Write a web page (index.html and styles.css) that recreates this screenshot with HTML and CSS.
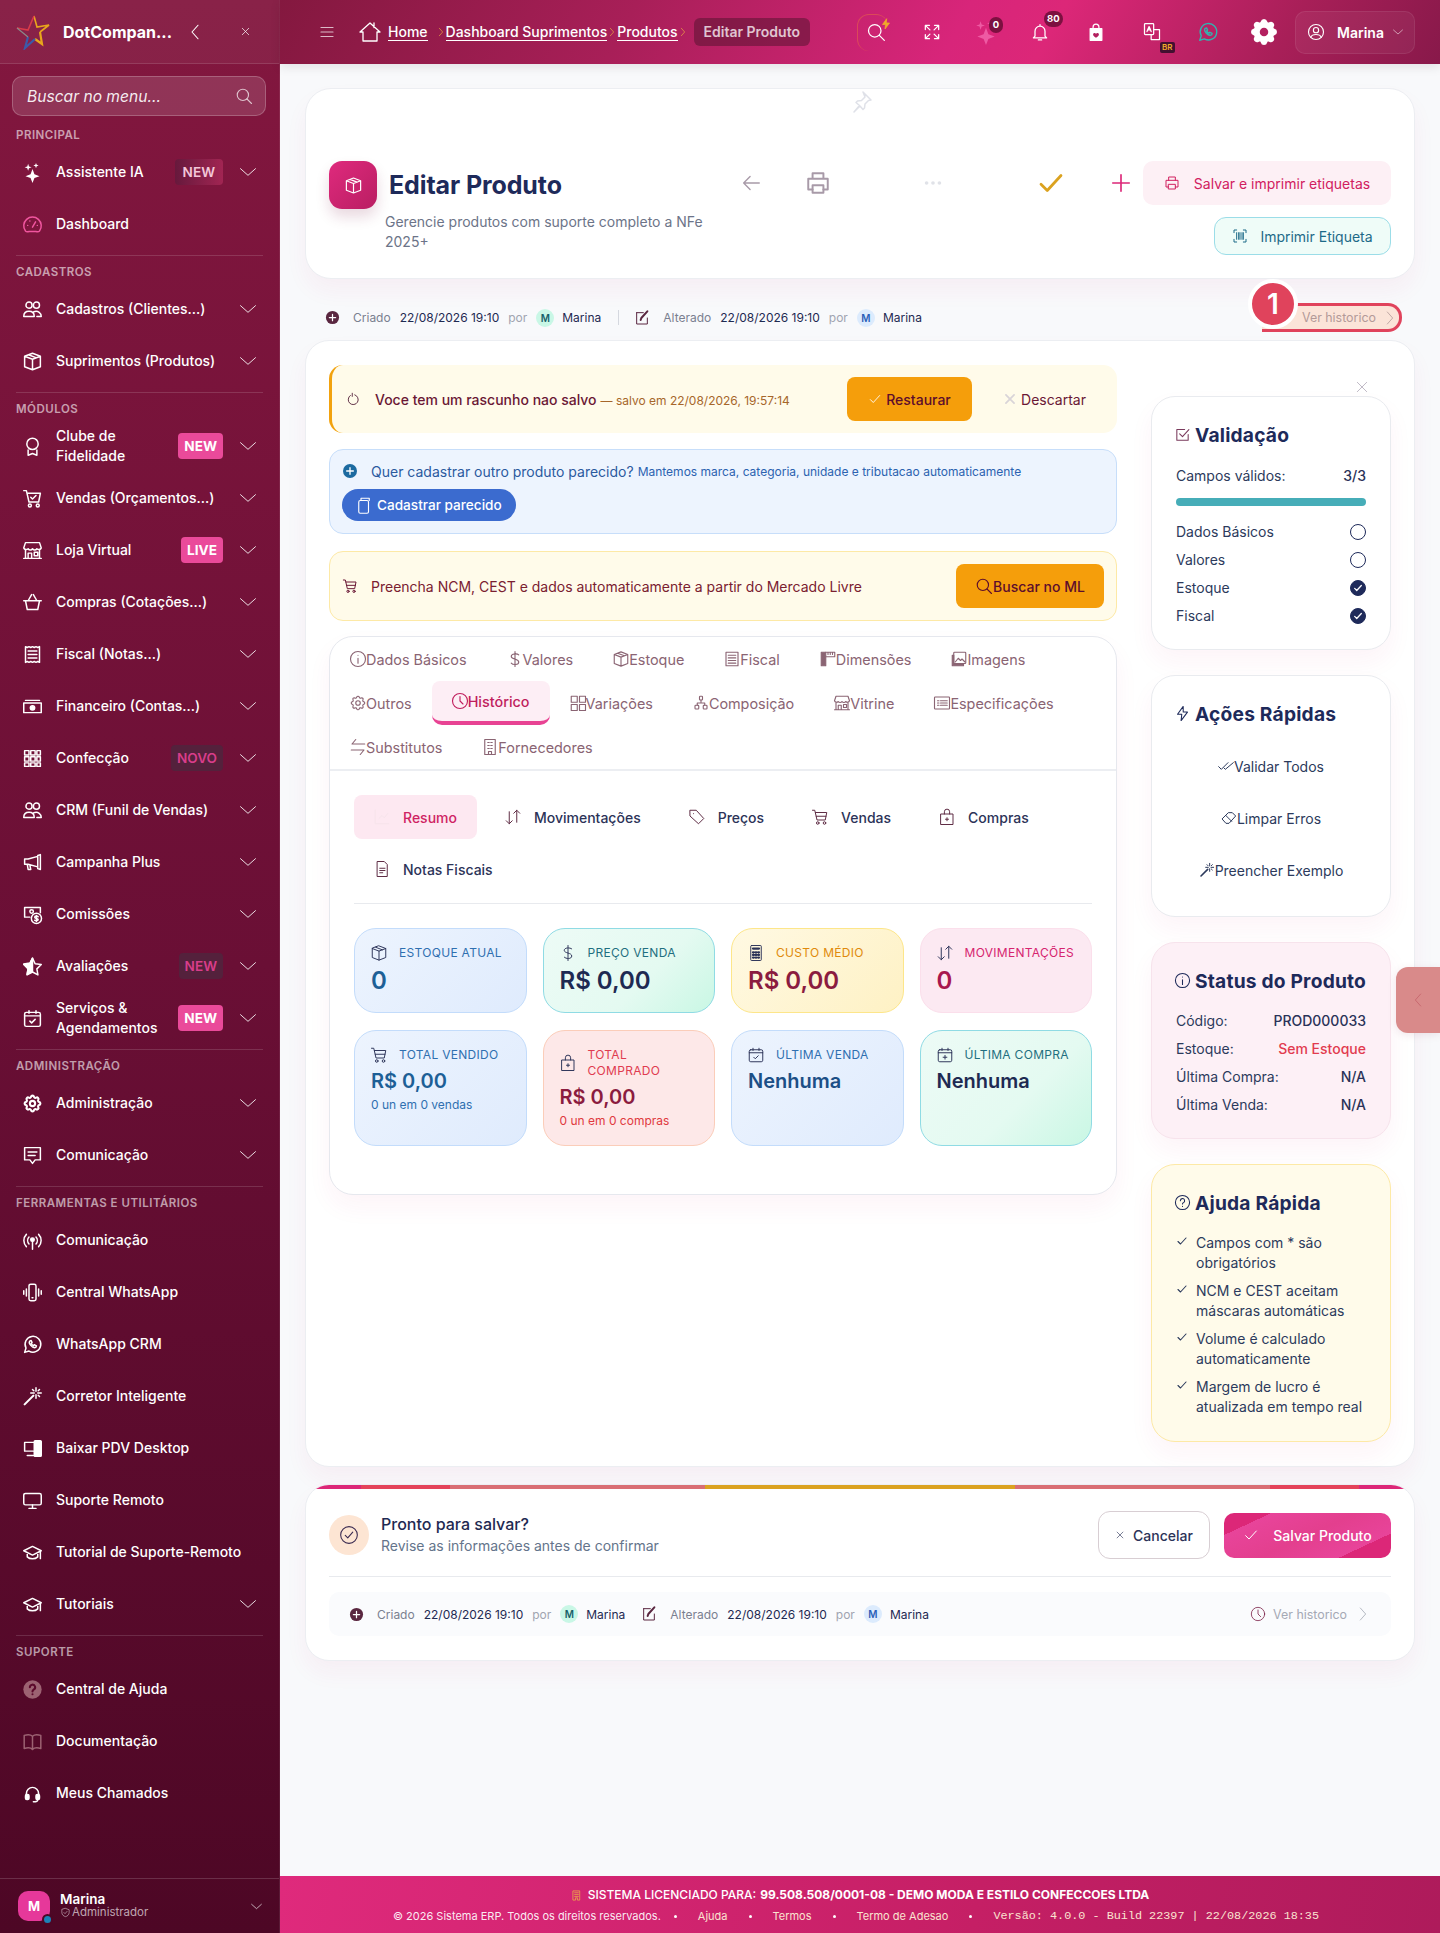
FILE: index.html
```html
<!DOCTYPE html>
<html lang="pt-BR">
<head>
    <meta charset="UTF-8">
    <title>Editar Produto</title>
    <meta name="viewport" content="width=device-width, initial-scale=1.0">
    <link rel="stylesheet" href="styles.css">
</head>
<body>
    <!-- icones -->
    <svg class="sprite" xmlns="http://www.w3.org/2000/svg">
        <symbol id="i-stars" viewBox="0 0 24 24"><path fill="currentColor" stroke="none" d="M12 8l2.200 6 5.800 2.200-5.800 2.200-2.200 5.600-2.200-5.600-5.800-2.200 5.800-2.200zM7 2l1 3 3 1-3 1-1 3-1-3-3-1 3-1zM16 1l.8 2.200 2.200.8-2.200.8L16 7l-.8-2.200L13 4l2.200-.8z"/></symbol>
        <symbol id="i-speedo" viewBox="0 0 24 24"><path d="M4 19.500a10 10 0 1 1 16 0c-1 1-2.500 1-4 .5H8c-1.500.5-3 .5-4-.5zM12 15l3.500-6M6.500 13h.01M9 8h.01M17.500 13h.01"/></symbol>
        <symbol id="i-people" viewBox="0 0 24 24"><circle cx="8" cy="7" r="3.500"/><circle cx="16.500" cy="7" r="3.500"/><path d="M2 20c0-4 2.500-6 6-6s6 2 6 6zM13.500 14.500c5-1.500 8.500 1.500 8.500 5.500h-5"/></symbol>
        <symbol id="i-box" viewBox="0 0 24 24"><path d="M12 2.500l9 3.500v12l-9 3.500-9-3.500V6zM3 6l9 3.500L21 6M12 9.500v12M7.500 4.300l9 3.500"/></symbol>
        <symbol id="i-award" viewBox="0 0 24 24"><circle cx="12" cy="9" r="6.500"/><path d="M7 16v6l5-2 5 2v-6"/></symbol>
        <symbol id="i-cart-check" viewBox="0 0 24 24"><path d="M2 3h3l3 13h11l2-10H6"/><circle cx="9" cy="20" r="1.700"/><circle cx="18" cy="20" r="1.700"/><path d="M10 10.500l2 2 4-4"/></symbol>
        <symbol id="i-cart" viewBox="0 0 24 24"><path d="M2 3h3l3 13h11l2-10H6M7 11h13"/><circle cx="9" cy="20" r="1.700"/><circle cx="18" cy="20" r="1.700"/></symbol>
        <symbol id="i-shop" viewBox="0 0 24 24"><path d="M4 3h16l2 6a3 3 0 0 1-5 1 3 3 0 0 1-5 0 3 3 0 0 1-5 0 3 3 0 0 1-5-1zM4 11v10h16V11M2 21h20M7 21v-6h4v6M14 14h4v4h-4z"/></symbol>
        <symbol id="i-basket" viewBox="0 0 24 24"><path d="M2 10h20M4 10l2 10h12l2-10M7 10l4-7M17 10l-4-7"/></symbol>
        <symbol id="i-receipt" viewBox="0 0 24 24"><path d="M4 3l2 1 2-1 2 1 2-1 2 1 2-1 2 1 2-1v18l-2-1-2 1-2-1-2 1-2-1-2 1-2-1-2 1zM7 8h10M7 12h10M7 16h10"/></symbol>
        <symbol id="i-cash" viewBox="0 0 24 24"><path d="M4 5h16M2 8h20v11H2z"/><circle cx="12" cy="13.500" r="2.500" fill="currentColor"/></symbol>
        <symbol id="i-grid" viewBox="0 0 24 24"><path d="M3 3h5v5H3zM10 3h5v5h-5zM17 3h4v5h-4zM3 10h5v5H3zM10 10h5v5h-5zM17 10h4v5h-4zM3 17h5v4H3zM10 17h5v4h-5zM17 17h4v4h-4z"/></symbol>
        <symbol id="i-mega" viewBox="0 0 24 24"><path d="M21 3v17l-3-1V4zM18 5L7 8H3v6h4l11 3M6 14l1 6h3l-1-5"/></symbol>
        <symbol id="i-coin" viewBox="0 0 24 24"><path d="M9 15H3V4h18v6"/><circle cx="11" cy="8.500" r="2"/><circle cx="16.500" cy="16.500" r="5.800"/><path d="M16.500 13v7M18.500 14.500c-1-1-4-1-4 .7s4 1 4 2.600-3 1.700-4 .7"/></symbol>
        <symbol id="i-star-half" viewBox="0 0 24 24"><path d="M12 2.500l3 6.300 7 1-5 4.900 1.200 6.900-6.200-3.300-6.200 3.300 1.200-6.900-5-4.900 7-1z"/><path fill="currentColor" d="M12 2.500v15.100l-6.200 3.300 1.200-6.900-5-4.900 7-1z"/></symbol>
        <symbol id="i-cal-check" viewBox="0 0 24 24"><rect x="3" y="5" width="18" height="16" rx="2"/><path d="M3 9h18M8 3v3M16 3v3M9 15l2 2 4-4"/></symbol>
        <symbol id="i-cal-plus" viewBox="0 0 24 24"><rect x="3" y="5" width="18" height="16" rx="2"/><path d="M3 9h18M8 3v3M16 3v3M12 12.500v5M9.500 15h5"/></symbol>
        <symbol id="i-gear" viewBox="0 0 24 24"><path d="M10.325 4.317c.426-1.756 2.924-1.756 3.350 0a1.724 1.724 0 0 0 2.573 1.066c1.543-.940 3.310.826 2.370 2.370a1.724 1.724 0 0 0 1.065 2.572c1.756.426 1.756 2.924 0 3.350a1.724 1.724 0 0 0-1.066 2.573c.940 1.543-.826 3.310-2.370 2.370a1.724 1.724 0 0 0-2.572 1.065c-.426 1.756-2.924 1.756-3.350 0a1.724 1.724 0 0 0-2.573-1.066c-1.543.940-3.310-.826-2.370-2.370a1.724 1.724 0 0 0-1.065-2.572c-1.756-.426-1.756-2.924 0-3.350a1.724 1.724 0 0 0 1.066-2.573c-.940-1.543.826-3.310 2.370-2.370 1 .608 2.296.070 2.572-1.065z"/><circle cx="12" cy="12" r="3"/></symbol>
        <symbol id="i-gear-fill" viewBox="0 0 24 24"><path fill="currentColor" d="M10.325 4.317c.426-1.756 2.924-1.756 3.350 0a1.724 1.724 0 0 0 2.573 1.066c1.543-.940 3.310.826 2.370 2.370a1.724 1.724 0 0 0 1.065 2.572c1.756.426 1.756 2.924 0 3.350a1.724 1.724 0 0 0-1.066 2.573c.940 1.543-.826 3.310-2.370 2.370a1.724 1.724 0 0 0-2.572 1.065c-.426 1.756-2.924 1.756-3.350 0a1.724 1.724 0 0 0-2.573-1.066c-1.543.940-3.310-.826-2.370-2.370a1.724 1.724 0 0 0-1.065-2.572c-1.756-.426-1.756-2.924 0-3.350a1.724 1.724 0 0 0 1.066-2.573c-.940-1.543.826-3.310 2.370-2.370 1 .608 2.296.070 2.572-1.065z"/><circle cx="12" cy="12" r="3.200" fill="#b3205f" stroke="none"/></symbol>
        <symbol id="i-chat" viewBox="0 0 24 24"><path d="M3 3h18v14h-6l-3 4-3-4H3zM7 8h10M7 12h8"/></symbol>
        <symbol id="i-signal" viewBox="0 0 24 24"><path d="M5 5a10 10 0 0 0 0 14M19 5a10 10 0 0 1 0 14M8 8a6 6 0 0 0 0 8M16 8a6 6 0 0 1 0 8M12 12v10"/><circle cx="12" cy="11" r="2" fill="currentColor"/></symbol>
        <symbol id="i-phone" viewBox="0 0 24 24"><rect x="8" y="2.500" width="8" height="19" rx="2"/><path d="M5 8v8M2 10v4M19 8v8M22 10v4M11.500 18h1"/></symbol>
        <symbol id="i-whats" viewBox="0 0 24 24"><path d="M3 21l1.600-5A9 9 0 1 1 8 19.500z"/><path d="M9 8c-1 1-.8 3 1 5s4.500 3 6 2l.5-1.500-2.500-1.200-1 1c-1-.4-2-1.500-2.500-2.500l1-1L10.500 7.500z"/></symbol>
        <symbol id="i-magic" viewBox="0 0 24 24"><path stroke-width="2.400" d="M3 21l10-10"/><path d="M16 2v4M16 10v4M10 8h4M18 8h4M12 4l1.500 1.500M20 4l-1.500 1.500M20 12l-1.500-1.500"/></symbol>
        <symbol id="i-pc" viewBox="0 0 24 24"><path d="M13 5H3v10h10M6 20h7"/><rect x="14" y="3" width="8" height="18" rx="1" fill="currentColor"/></symbol>
        <symbol id="i-display" viewBox="0 0 24 24"><rect x="2" y="4" width="20" height="13" rx="2"/><path d="M8 21h8M12 17v4"/></symbol>
        <symbol id="i-grad" viewBox="0 0 24 24"><path d="M12 5L2 10l10 5 10-5zM6 12v5c3 3 9 3 12 0v-5M21 10v9"/></symbol>
        <symbol id="i-help-fill" viewBox="0 0 24 24"><circle cx="12" cy="12" r="10.500" fill="currentColor" stroke="none"/><path stroke="#5c0a2c" stroke-width="2.400" d="M9 9.500a3 3 0 1 1 4.300 2.700c-.8.500-1.300 1-1.300 2M12 17.500h.01"/></symbol>
        <symbol id="i-help" viewBox="0 0 24 24"><circle cx="12" cy="12" r="10"/><path d="M9 9.500a3 3 0 1 1 4.300 2.700c-.8.500-1.300 1-1.300 2M12 17.500h.01"/></symbol>
        <symbol id="i-book" viewBox="0 0 24 24"><path d="M12 6C10 4 6 4 2.500 5v15C6 19 10 19 12 21c2-2 6-2 9.500-1V5C18 4 14 4 12 6zM12 6v15"/></symbol>
        <symbol id="i-headset" viewBox="0 0 24 24"><path d="M5 14v-2a7 7 0 0 1 14 0v2M18 19c0 2-3 2.500-5 2.500"/><rect x="4" y="13" width="4" height="6" rx="1.500" fill="currentColor"/><rect x="16" y="13" width="4" height="6" rx="1.500" fill="currentColor"/></symbol>
        <symbol id="i-down" viewBox="0 0 24 24"><path d="M3 8l9 8 9-8"/></symbol>
        <symbol id="i-left" viewBox="0 0 24 24"><path d="M16 3l-8 9 8 9"/></symbol>
        <symbol id="i-right" viewBox="0 0 24 24"><path d="M8 3l8 9-8 9"/></symbol>
        <symbol id="i-x" viewBox="0 0 24 24"><path d="M5 5l14 14M19 5L5 19"/></symbol>
        <symbol id="i-search" viewBox="0 0 24 24"><circle cx="10.500" cy="10.500" r="7.500"/><path d="M16 16l6 6"/></symbol>
        <symbol id="i-list" viewBox="0 0 24 24"><path d="M4 6h16M4 12h16M4 18h16"/></symbol>
        <symbol id="i-home" viewBox="0 0 24 24"><path d="M12 3L2 12h3v9h14v-9h3zM16 3v4.500"/></symbol>
        <symbol id="i-bolt" viewBox="0 0 24 24"><path d="M13 2L5 13h6l-1 9 9-12h-6z"/></symbol>
        <symbol id="i-expand" viewBox="0 0 24 24"><path d="M4 9V4h5M4 4l5.500 5.500M20 9V4h-5M20 4l-5.500 5.500M4 15v5h5M4 20l5.500-5.500M20 15v5h-5M20 20l-5.500-5.500"/></symbol>
        <symbol id="i-bell" viewBox="0 0 24 24"><path d="M6 17V11a6 6 0 0 1 12 0v6l2 2H4zM10 21.500h4M12 3v2"/></symbol>
        <symbol id="i-bag-heart" viewBox="0 0 24 24"><path fill="currentColor" d="M5 8h14v14H5z"/><path d="M8.500 8V6a3.500 3.500 0 0 1 7 0v2"/><path fill="#b3205f" stroke="none" d="M12 19c-3-2-3.500-3-3.500-4a1.800 1.800 0 0 1 3.500-.7 1.800 1.800 0 0 1 3.500.7c0 1-.5 2-3.500 4z"/></symbol>
        <symbol id="i-translate" viewBox="0 0 24 24"><rect x="3" y="2" width="11" height="13" rx="1"/><path d="M6 11.500l2.500-6 2.500 6M7 9.500h3M14 9h7v12H11v-6"/></symbol>
        <symbol id="i-user" viewBox="0 0 24 24"><circle cx="12" cy="12" r="10"/><circle cx="12" cy="9.500" r="3.500"/><path d="M5 19c2-5 12-5 14 0"/></symbol>
        <symbol id="i-pin" viewBox="0 0 24 24"><path d="M13 2l8 8-2.500.5-3.500 3.500-.5 4-1.500 1.500-3-3.500-6 6 5.500-6.500-3.500-3 1.500-1.500 4-.5 3.500-3.500z"/></symbol>
        <symbol id="i-back" viewBox="0 0 24 24"><path d="M21 12H4M11 5l-7 7 7 7"/></symbol>
        <symbol id="i-print" viewBox="0 0 24 24"><path d="M7 8V3h10v5M7 18H3V8h18v10h-4"/><rect x="7" y="14" width="10" height="7"/></symbol>
        <symbol id="i-dots" viewBox="0 0 24 24"><circle cx="5" cy="12" r="2" fill="currentColor" stroke="none"/><circle cx="12" cy="12" r="2" fill="currentColor" stroke="none"/><circle cx="19" cy="12" r="2" fill="currentColor" stroke="none"/></symbol>
        <symbol id="i-check" viewBox="0 0 24 24"><path d="M4 13l5 5L20 6"/></symbol>
        <symbol id="i-check2" viewBox="0 0 24 24"><path d="M1 13l4 4L15 7M9 15l2 2L23 7"/></symbol>
        <symbol id="i-plus" viewBox="0 0 24 24"><path d="M12 3v18M3 12h18"/></symbol>
        <symbol id="i-barcode" viewBox="0 0 24 24"><path d="M3 7V3h4M17 3h4v4M3 17v4h4M17 21h4v-4M7 7v10M10 7v10M12 7v10M15 7v10M17 7v10"/></symbol>
        <symbol id="i-plus-fill" viewBox="0 0 24 24"><circle cx="12" cy="12" r="10.500" fill="currentColor" stroke="none"/><path stroke="#fff" stroke-width="2" d="M12 7v10M7 12h10"/></symbol>
        <symbol id="i-edit" viewBox="0 0 24 24"><path d="M4 4h10M4 4v17h16v-9"/><path stroke-width="3" d="M20 2l-9 10-1 3"/></symbol>
        <symbol id="i-clock" viewBox="0 0 24 24"><circle cx="12" cy="12" r="10"/><path d="M12 6v6l4 4"/></symbol>
        <symbol id="i-redo" viewBox="0 0 24 24"><path d="M14 4.500a8 8 0 1 1-7 1M10 2v5"/></symbol>
        <symbol id="i-info" viewBox="0 0 24 24"><circle cx="12" cy="12" r="10"/><path d="M12 11v6.500M12 7h.01"/></symbol>
        <symbol id="i-doc-list" viewBox="0 0 24 24"><rect x="4" y="3" width="16" height="18"/><path d="M7 7h10M7 10.500h10M7 14h10M7 17.500h10"/></symbol>
        <symbol id="i-ruler" viewBox="0 0 24 24"><path fill="currentColor" d="M3 3h6v18H3z"/><path d="M9 3h12v6H9M12 3v3M15 3v3M18 3v3"/></symbol>
        <symbol id="i-images" viewBox="0 0 24 24"><rect x="5" y="3" width="16" height="15" rx="1"/><path fill="currentColor" d="M3 7v14h15v-3H5V7z"/><path d="M7 16l4-5 3 3 2-2 4 4"/></symbol>
        <symbol id="i-swap" viewBox="0 0 24 24"><path d="M21 8H4l5-6M3 16h17l-5 6"/></symbol>
        <symbol id="i-building" viewBox="0 0 24 24"><rect x="5" y="2" width="14" height="20"/><path d="M9 6h2M13 6h2M9 10h2M13 10h2M9 14h2M13 14h2M10 22v-4h4v4"/></symbol>
        <symbol id="i-nodes" viewBox="0 0 24 24"><rect x="10" y="3" width="4" height="5" rx="1"/><rect x="4" y="15" width="5" height="5" rx="1"/><rect x="15" y="15" width="5" height="5" rx="1"/><path d="M12 8v3M7 15v-3h10v3"/></symbol>
        <symbol id="i-squares" viewBox="0 0 24 24"><path d="M3 3h8v8H3zM14 3h8v8h-8zM3 14h8v8H3zM14 14h8v8h-8z"/></symbol>
        <symbol id="i-lines" viewBox="0 0 24 24"><rect x="2" y="4" width="20" height="16" rx="1"/><path d="M6 9h2M10 9h9M6 12h2M10 12h9M6 15h2M10 15h9"/></symbol>
        <symbol id="i-tags" viewBox="0 0 24 24"><path d="M3 3h8l10 11-7 7L3 11zM7.500 7.500h.01"/></symbol>
        <symbol id="i-updown" viewBox="0 0 24 24"><path d="M7 21V5M3 17l4 4 4-4M17 3v16M13 7l4-4 4 4"/></symbol>
        <symbol id="i-bag-plus" viewBox="0 0 24 24"><path d="M4 8h16v14H4zM8.500 8V5a3.500 3.500 0 0 1 7 0v3M12 13v4M10 15h4"/></symbol>
        <symbol id="i-calc" viewBox="0 0 24 24"><rect x="5" y="2" width="14" height="20" rx="1"/><path stroke-width="3" d="M8 6h8M8 11h1M11.500 11h1M15 11h1M8 14.500h1M11.500 14.500h1M15 14.500h1M8 18h1M11.500 18h1M15 18h1"/></symbol>
        <symbol id="i-check-box" viewBox="0 0 24 24"><path d="M20 12v8H4V5h11M8 11l4 4 9-10"/></symbol>
        <symbol id="i-check-circle" viewBox="0 0 24 24"><circle cx="12" cy="12" r="10"/><path d="M7.500 12.500l3 3 6-7"/></symbol>
        <symbol id="i-eraser" viewBox="0 0 24 24"><path d="M2 13l9-9h6l5 5-10 11H8zM7 8l9 9"/></symbol>
        <symbol id="i-doc" viewBox="0 0 24 24"><path d="M6 2h9l4 4v16H6zM9 11h7M9 14h7M9 17h4"/></symbol>
        <symbol id="i-shield" viewBox="0 0 24 24"><path d="M12 3l8 3v6c0 5-4 8-8 9-4-1-8-4-8-9V6zM8.500 12l2.500 2.500 4.500-5"/></symbol>
        <symbol id="i-copy" viewBox="0 0 24 24"><rect x="5" y="6" width="13" height="17" rx="2"/><path d="M8 6V3h11v3"/></symbol>
        <symbol id="i-chart" viewBox="0 0 24 24"><path d="M3 3v18h18M8 14l4-4 3 3 5-6"/></symbol>
        <symbol id="i-license" viewBox="0 0 24 24"><path d="M5 2h14v20h-5v-5h-4v5H5zM8 6h8M8 10h8M8 14h8"/></symbol>
        <symbol id="i-dollar" viewBox="0 0 24 24"><path d="M12 2v20M17 6.500C15 4.500 7 4.500 7 8.500s10 3 10 7.500-8 4-10 1.500"/></symbol>
    </svg>

    <!-- menu lateral -->
    <aside class="sidebar">
        <div class="brand">
            <svg class="brand-logo" viewBox="0 0 36 36">
                <path fill="none" stroke="#e8a61c" stroke-width="1.600" d="M19 2l3 11 12-2-9 7"/>
                <path fill="none" stroke="#d83a4a" stroke-width="1.600" d="M2 14l11 2 6-14"/>
                <path fill="none" stroke="#e8a61c" stroke-width="2.200" d="M25 18l2 12-7-5"/>
                <path fill="none" stroke="#3c5aa8" stroke-width="2.200" d="M20 25L10 34l3-11"/>
                <path fill="none" stroke="#8a8a8a" stroke-width="1.200" d="M13 23L2 14"/>
            </svg>
            <span class="brand-name">DotCompan...</span>
            <svg class="ic brand-back"><use href="#i-left"/></svg>
            <svg class="ic brand-close"><use href="#i-x"/></svg>
        </div>
        <div class="menu-search">
            <span>Buscar no menu...</span>
            <svg class="ic"><use href="#i-search"/></svg>
        </div>
        <nav class="menu">
            <div class="menu-group">
                <div class="menu-label">PRINCIPAL</div>
                <a class="menu-item"><svg class="ic"><use href="#i-stars"/></svg><span class="menu-text">Assistente IA</span><span class="tag tag-soft">NEW</span><svg class="ic menu-arrow"><use href="#i-down"/></svg></a>
                <a class="menu-item"><svg class="ic ic-pink"><use href="#i-speedo"/></svg><span class="menu-text">Dashboard</span></a>
            </div>
            <div class="menu-group">
                <div class="menu-label">CADASTROS</div>
                <a class="menu-item"><svg class="ic"><use href="#i-people"/></svg><span class="menu-text">Cadastros (Clientes...)</span><svg class="ic menu-arrow"><use href="#i-down"/></svg></a>
                <a class="menu-item"><svg class="ic"><use href="#i-box"/></svg><span class="menu-text">Suprimentos (Produtos)</span><svg class="ic menu-arrow"><use href="#i-down"/></svg></a>
            </div>
            <div class="menu-group">
                <div class="menu-label">MÓDULOS</div>
                <a class="menu-item"><svg class="ic"><use href="#i-award"/></svg><span class="menu-text">Clube de Fidelidade</span><span class="tag">NEW</span><svg class="ic menu-arrow"><use href="#i-down"/></svg></a>
                <a class="menu-item"><svg class="ic"><use href="#i-cart-check"/></svg><span class="menu-text">Vendas (Orçamentos...)</span><svg class="ic menu-arrow"><use href="#i-down"/></svg></a>
                <a class="menu-item"><svg class="ic"><use href="#i-shop"/></svg><span class="menu-text">Loja Virtual</span><span class="tag">LIVE</span><svg class="ic menu-arrow"><use href="#i-down"/></svg></a>
                <a class="menu-item"><svg class="ic"><use href="#i-basket"/></svg><span class="menu-text">Compras (Cotações...)</span><svg class="ic menu-arrow"><use href="#i-down"/></svg></a>
                <a class="menu-item"><svg class="ic"><use href="#i-receipt"/></svg><span class="menu-text">Fiscal (Notas...)</span><svg class="ic menu-arrow"><use href="#i-down"/></svg></a>
                <a class="menu-item"><svg class="ic"><use href="#i-cash"/></svg><span class="menu-text">Financeiro (Contas...)</span><svg class="ic menu-arrow"><use href="#i-down"/></svg></a>
                <a class="menu-item"><svg class="ic"><use href="#i-grid"/></svg><span class="menu-text">Confecção</span><span class="tag tag-dim">NOVO</span><svg class="ic menu-arrow"><use href="#i-down"/></svg></a>
                <a class="menu-item"><svg class="ic"><use href="#i-people"/></svg><span class="menu-text">CRM (Funil de Vendas)</span><svg class="ic menu-arrow"><use href="#i-down"/></svg></a>
                <a class="menu-item"><svg class="ic"><use href="#i-mega"/></svg><span class="menu-text">Campanha Plus</span><svg class="ic menu-arrow"><use href="#i-down"/></svg></a>
                <a class="menu-item"><svg class="ic"><use href="#i-coin"/></svg><span class="menu-text">Comissões</span><svg class="ic menu-arrow"><use href="#i-down"/></svg></a>
                <a class="menu-item"><svg class="ic"><use href="#i-star-half"/></svg><span class="menu-text">Avaliações</span><span class="tag tag-dim">NEW</span><svg class="ic menu-arrow"><use href="#i-down"/></svg></a>
                <a class="menu-item"><svg class="ic"><use href="#i-cal-check"/></svg><span class="menu-text">Serviços &amp; Agendamentos</span><span class="tag">NEW</span><svg class="ic menu-arrow"><use href="#i-down"/></svg></a>
            </div>
            <div class="menu-group">
                <div class="menu-label">ADMINISTRAÇÃO</div>
                <a class="menu-item"><svg class="ic ic-bold"><use href="#i-gear"/></svg><span class="menu-text">Administração</span><svg class="ic menu-arrow"><use href="#i-down"/></svg></a>
                <a class="menu-item"><svg class="ic"><use href="#i-chat"/></svg><span class="menu-text">Comunicação</span><svg class="ic menu-arrow"><use href="#i-down"/></svg></a>
            </div>
            <div class="menu-group">
                <div class="menu-label">FERRAMENTAS E UTILITÁRIOS</div>
                <a class="menu-item"><svg class="ic"><use href="#i-signal"/></svg><span class="menu-text">Comunicação</span></a>
                <a class="menu-item"><svg class="ic"><use href="#i-phone"/></svg><span class="menu-text">Central WhatsApp</span></a>
                <a class="menu-item"><svg class="ic"><use href="#i-whats"/></svg><span class="menu-text">WhatsApp CRM</span></a>
                <a class="menu-item"><svg class="ic"><use href="#i-magic"/></svg><span class="menu-text">Corretor Inteligente</span></a>
                <a class="menu-item"><svg class="ic"><use href="#i-pc"/></svg><span class="menu-text">Baixar PDV Desktop</span></a>
                <a class="menu-item"><svg class="ic"><use href="#i-display"/></svg><span class="menu-text">Suporte Remoto</span></a>
                <a class="menu-item"><svg class="ic"><use href="#i-grad"/></svg><span class="menu-text">Tutorial de Suporte-Remoto</span></a>
                <a class="menu-item"><svg class="ic"><use href="#i-grad"/></svg><span class="menu-text">Tutoriais</span><svg class="ic menu-arrow"><use href="#i-down"/></svg></a>
            </div>
            <div class="menu-group menu-group-last">
                <div class="menu-label">SUPORTE</div>
                <a class="menu-item"><svg class="ic ic-dusty"><use href="#i-help-fill"/></svg><span class="menu-text">Central de Ajuda</span></a>
                <a class="menu-item"><svg class="ic ic-dusty"><use href="#i-book"/></svg><span class="menu-text">Documentação</span></a>
                <a class="menu-item"><svg class="ic"><use href="#i-headset"/></svg><span class="menu-text">Meus Chamados</span></a>
            </div>
        </nav>
        <div class="side-user">
            <div class="side-avatar">M<span class="side-status"></span></div>
            <div class="side-user-text">
                <strong>Marina</strong>
                <span><svg class="ic"><use href="#i-shield"/></svg>Administrador</span>
            </div>
            <svg class="ic side-user-arrow"><use href="#i-down"/></svg>
        </div>
    </aside>

    <div class="page">
        <!-- barra do topo -->
        <header class="topbar">
            <svg class="ic top-burger"><use href="#i-list"/></svg>
            <div class="crumbs">
                <svg class="ic crumb-home"><use href="#i-home"/></svg>
                <a class="crumb crumb-first">Home</a>
                <svg class="ic crumb-sep"><use href="#i-right"/></svg>
                <a class="crumb">Dashboard Suprimentos</a>
                <svg class="ic crumb-sep"><use href="#i-right"/></svg>
                <a class="crumb">Produtos</a>
                <svg class="ic crumb-sep"><use href="#i-right"/></svg>
                <span class="crumb-current">Editar Produto</span>
            </div>
            <div class="top-tools">
                <span class="top-btn top-search"><svg class="ic"><use href="#i-search"/></svg><svg class="ic top-bolt"><use href="#i-bolt"/></svg></span>
                <span class="top-btn"><svg class="ic"><use href="#i-expand"/></svg></span>
                <span class="top-btn top-spark"><svg class="ic"><use href="#i-stars"/></svg><b class="count">0</b></span>
                <span class="top-btn"><svg class="ic"><use href="#i-bell"/></svg><b class="count">80</b></span>
                <span class="top-btn"><svg class="ic"><use href="#i-bag-heart"/></svg></span>
                <span class="top-btn"><svg class="ic"><use href="#i-translate"/></svg><b class="lang">BR</b></span>
                <span class="top-btn top-whats"><svg class="ic"><use href="#i-whats"/></svg></span>
                <span class="top-btn top-gear"><svg class="ic"><use href="#i-gear-fill"/></svg></span>
            </div>
            <div class="top-user">
                <svg class="ic"><use href="#i-user"/></svg>
                <span>Marina</span>
                <svg class="ic top-user-arrow"><use href="#i-down"/></svg>
            </div>
        </header>

        <main class="content">
            <!-- cabecalho da pagina -->
            <section class="head-card">
                <svg class="ic head-pin"><use href="#i-pin"/></svg>
                <div class="head-left">
                    <div class="head-title">
                        <span class="head-icon"><svg class="ic"><use href="#i-box"/></svg></span>
                        <h1>Editar Produto</h1>
                    </div>
                    <p>Gerencie produtos com suporte completo a NFe 2025+</p>
                </div>
                <div class="head-right">
                    <div class="head-tools">
                        <span class="tool tool-back"><svg class="ic"><use href="#i-back"/></svg></span>
                        <span class="tool tool-print"><svg class="ic"><use href="#i-print"/></svg></span>
                        <span class="tool tool-dots"><svg class="ic"><use href="#i-dots"/></svg></span>
                        <span class="tool tool-check"><svg class="ic"><use href="#i-check"/></svg></span>
                        <span class="tool tool-plus"><svg class="ic"><use href="#i-plus"/></svg></span>
                        <a class="btn-label"><svg class="ic"><use href="#i-print"/></svg>Salvar e imprimir etiquetas</a>
                    </div>
                    <a class="btn-tag"><svg class="ic"><use href="#i-barcode"/></svg>Imprimir Etiqueta</a>
                </div>
            </section>

            <div class="audit audit-top">
                <svg class="ic audit-add"><use href="#i-plus-fill"/></svg>
                <span class="audit-key">Criado</span>
                <span class="audit-date">22/08/2026 19:10</span>
                <span class="audit-por">por</span>
                <span class="audit-avatar av-green">M</span>
                <span class="audit-name">Marina</span>
                <span class="audit-sep"></span>
                <svg class="ic audit-edit"><use href="#i-edit"/></svg>
                <span class="audit-key">Alterado</span>
                <span class="audit-date">22/08/2026 19:10</span>
                <span class="audit-por">por</span>
                <span class="audit-avatar av-blue">M</span>
                <span class="audit-name">Marina</span>
                <a class="audit-link audit-link-marked">
                    <span class="step-mark">1</span>
                    Ver historico
                    <svg class="ic"><use href="#i-right"/></svg>
                </a>
            </div>

            <section class="main-card">
                <div class="form-col">
                    <div class="notice notice-draft">
                        <svg class="ic notice-redo"><use href="#i-redo"/></svg>
                        <span class="draft-text"><strong>Voce tem um rascunho nao salvo</strong> <small>— salvo em 22/08/2026, 19:57:14</small></span>
                        <a class="btn-amber btn-restore"><svg class="ic"><use href="#i-check"/></svg>Restaurar</a>
                        <a class="btn-discard"><svg class="ic"><use href="#i-x"/></svg>Descartar</a>
                    </div>

                    <div class="notice-similar">
                        <div class="similar-line">
                            <svg class="ic"><use href="#i-plus-fill"/></svg>
                            <span>Quer cadastrar outro produto parecido?</span>
                            <small>Mantemos marca, categoria, unidade e tributacao automaticamente</small>
                        </div>
                        <a class="btn-similar"><svg class="ic"><use href="#i-copy"/></svg>Cadastrar parecido</a>
                    </div>

                    <div class="notice notice-ml">
                        <svg class="ic"><use href="#i-cart"/></svg>
                        <span class="ml-text">Preencha NCM, CEST e dados automaticamente a partir do Mercado Livre</span>
                        <a class="btn-amber btn-ml"><svg class="ic"><use href="#i-search"/></svg>Buscar no ML</a>
                    </div>

                    <div class="tabs-card">
                        <div class="tabs">
                            <a class="tab"><svg class="ic"><use href="#i-info"/></svg>Dados Básicos</a>
                            <a class="tab"><svg class="ic"><use href="#i-dollar"/></svg>Valores</a>
                            <a class="tab"><svg class="ic"><use href="#i-box"/></svg>Estoque</a>
                            <a class="tab"><svg class="ic"><use href="#i-doc-list"/></svg>Fiscal</a>
                            <a class="tab"><svg class="ic"><use href="#i-ruler"/></svg>Dimensões</a>
                            <a class="tab"><svg class="ic"><use href="#i-images"/></svg>Imagens</a>
                            <a class="tab"><svg class="ic"><use href="#i-gear"/></svg>Outros</a>
                            <a class="tab tab-active"><svg class="ic"><use href="#i-clock"/></svg>Histórico</a>
                            <a class="tab"><svg class="ic"><use href="#i-squares"/></svg>Variações</a>
                            <a class="tab"><svg class="ic"><use href="#i-nodes"/></svg>Composição</a>
                            <a class="tab"><svg class="ic"><use href="#i-shop"/></svg>Vitrine</a>
                            <a class="tab"><svg class="ic"><use href="#i-lines"/></svg>Especificações</a>
                            <a class="tab"><svg class="ic"><use href="#i-swap"/></svg>Substitutos</a>
                            <a class="tab"><svg class="ic"><use href="#i-building"/></svg>Fornecedores</a>
                        </div>
                        <div class="history">
                            <div class="subtabs">
                                <a class="subtab subtab-active"><svg class="ic"><use href="#i-chart"/></svg>Resumo</a>
                                <a class="subtab"><svg class="ic"><use href="#i-updown"/></svg>Movimentações</a>
                                <a class="subtab"><svg class="ic"><use href="#i-tags"/></svg>Preços</a>
                                <a class="subtab"><svg class="ic"><use href="#i-cart"/></svg>Vendas</a>
                                <a class="subtab"><svg class="ic"><use href="#i-bag-plus"/></svg>Compras</a>
                                <a class="subtab"><svg class="ic"><use href="#i-doc"/></svg>Notas Fiscais</a>
                            </div>
                            <div class="stats">
                                <div class="stat stat-blue">
                                    <div class="stat-label"><svg class="ic"><use href="#i-box"/></svg>Estoque Atual</div>
                                    <div class="stat-value">0</div>
                                </div>
                                <div class="stat stat-green">
                                    <div class="stat-label"><svg class="ic"><use href="#i-dollar"/></svg>Preço Venda</div>
                                    <div class="stat-value">R$ 0,00</div>
                                </div>
                                <div class="stat stat-yellow">
                                    <div class="stat-label"><svg class="ic"><use href="#i-calc"/></svg>Custo Médio</div>
                                    <div class="stat-value">R$ 0,00</div>
                                </div>
                                <div class="stat stat-pink">
                                    <div class="stat-label"><svg class="ic"><use href="#i-updown"/></svg>Movimentações</div>
                                    <div class="stat-value">0</div>
                                </div>
                                <div class="stat stat-blue stat-small">
                                    <div class="stat-label"><svg class="ic"><use href="#i-cart"/></svg>Total Vendido</div>
                                    <div class="stat-value">R$ 0,00</div>
                                    <div class="stat-sub">0 un em 0 vendas</div>
                                </div>
                                <div class="stat stat-red stat-small">
                                    <div class="stat-label"><svg class="ic"><use href="#i-bag-plus"/></svg><span>Total<br>Comprado</span></div>
                                    <div class="stat-value">R$ 0,00</div>
                                    <div class="stat-sub">0 un em 0 compras</div>
                                </div>
                                <div class="stat stat-blue stat-small stat-date">
                                    <div class="stat-label"><svg class="ic"><use href="#i-cal-check"/></svg>Última Venda</div>
                                    <div class="stat-value">Nenhuma</div>
                                </div>
                                <div class="stat stat-green stat-small">
                                    <div class="stat-label"><svg class="ic"><use href="#i-cal-plus"/></svg>Última Compra</div>
                                    <div class="stat-value">Nenhuma</div>
                                </div>
                            </div>
                        </div>
                    </div>
                </div>

                <aside class="side-col">
                    <div class="side-close"><svg class="ic"><use href="#i-x"/></svg></div>
                    <div class="side-card">
                        <h3><svg class="ic ic-mauve"><use href="#i-check-box"/></svg>Validação</h3>
                        <div class="row-between valid-count"><span>Campos válidos:</span><b>3/3</b></div>
                        <div class="valid-bar"></div>
                        <ul class="valid-list">
                            <li>Dados Básicos<span class="dot"></span></li>
                            <li>Valores<span class="dot"></span></li>
                            <li>Estoque<span class="dot dot-on"><svg class="ic"><use href="#i-check"/></svg></span></li>
                            <li>Fiscal<span class="dot dot-on"><svg class="ic"><use href="#i-check"/></svg></span></li>
                        </ul>
                    </div>
                    <div class="side-card">
                        <h3><svg class="ic"><use href="#i-bolt"/></svg>Ações Rápidas</h3>
                        <div class="quick-list">
                            <a class="quick"><svg class="ic"><use href="#i-check2"/></svg>Validar Todos</a>
                            <a class="quick"><svg class="ic"><use href="#i-eraser"/></svg>Limpar Erros</a>
                            <a class="quick"><svg class="ic"><use href="#i-magic"/></svg>Preencher Exemplo</a>
                        </div>
                    </div>
                    <div class="side-card side-card-pink">
                        <h3><svg class="ic"><use href="#i-info"/></svg>Status do Produto</h3>
                        <div class="status-list">
                            <div class="row-between"><span>Código:</span><b>PROD000033</b></div>
                            <div class="row-between"><span>Estoque:</span><b class="txt-red">Sem Estoque</b></div>
                            <div class="row-between"><span>Última Compra:</span><b>N/A</b></div>
                            <div class="row-between"><span>Última Venda:</span><b>N/A</b></div>
                        </div>
                    </div>
                    <div class="side-card side-card-yellow">
                        <h3><svg class="ic"><use href="#i-help"/></svg>Ajuda Rápida</h3>
                        <ul class="help-list">
                            <li><svg class="ic"><use href="#i-check"/></svg>Campos com * são obrigatórios</li>
                            <li><svg class="ic"><use href="#i-check"/></svg>NCM e CEST aceitam máscaras automáticas</li>
                            <li><svg class="ic"><use href="#i-check"/></svg>Volume é calculado automaticamente</li>
                            <li><svg class="ic"><use href="#i-check"/></svg>Margem de lucro é atualizada em tempo real</li>
                        </ul>
                    </div>
                </aside>
            </section>

            <!-- rodape do formulario -->
            <section class="save-card">
                <div class="save-row">
                    <span class="save-icon"><svg class="ic"><use href="#i-check-circle"/></svg></span>
                    <div class="save-text">
                        <strong>Pronto para salvar?</strong>
                        <span>Revise as informações antes de confirmar</span>
                    </div>
                    <a class="btn-cancel"><svg class="ic"><use href="#i-x"/></svg>Cancelar</a>
                    <a class="btn-save"><svg class="ic"><use href="#i-check"/></svg>Salvar Produto</a>
                </div>
                <div class="audit audit-bottom">
                    <svg class="ic audit-add"><use href="#i-plus-fill"/></svg>
                    <span class="audit-key">Criado</span>
                    <span class="audit-date">22/08/2026 19:10</span>
                    <span class="audit-por">por</span>
                    <span class="audit-avatar av-green">M</span>
                    <span class="audit-name">Marina</span>
                    <svg class="ic audit-edit"><use href="#i-edit"/></svg>
                    <span class="audit-key">Alterado</span>
                    <span class="audit-date">22/08/2026 19:10</span>
                    <span class="audit-por">por</span>
                    <span class="audit-avatar av-blue">M</span>
                    <span class="audit-name">Marina</span>
                    <a class="audit-link">
                        <svg class="ic audit-clock"><use href="#i-clock"/></svg>
                        Ver historico
                        <svg class="ic"><use href="#i-right"/></svg>
                    </a>
                </div>
            </section>
        </main>

        <footer class="footer">
            <div class="foot-license"><svg class="ic"><use href="#i-license"/></svg>SISTEMA LICENCIADO PARA: <b>99.508.508/0001-08 - DEMO MODA E ESTILO CONFECCOES LTDA</b></div>
            <div class="foot-links">
                <span>© 2026 Sistema ERP. Todos os direitos reservados.</span>
                <i class="foot-dot-first"></i><a>Ajuda</a>
                <i></i><a>Termos</a>
                <i></i><a>Termo de Adesao</a>
                <i></i><code>Versão: 4.0.0 - Build 22397 | 22/08/2026 18:35</code>
            </div>
        </footer>
    </div>

    <span class="float-tab"><svg class="ic"><use href="#i-left"/></svg></span>
</body>
</html>
```

FILE: styles.css
```css
html,body {
    margin: 0;
    padding: 0;
    min-height: 100vh;
    font-family: Inter, 'Liberation Sans', Arial, sans-serif;
    color: #1f2a52;
    background: #f8f9fb;
}
body {
    display: flex;
    position: relative;
}
a { text-decoration: none; color: inherit; }
h1,h3,p,ul { margin: 0; padding: 0; }
ul { list-style: none; }
.sprite { display: none; }
.ic {
    width: 16px;
    height: 16px;
    flex: none;
    fill: none;
    stroke: currentColor;
    stroke-width: 1.5;
    stroke-linecap: round;
    stroke-linejoin: round;
}

/* menu lateral */
.sidebar {
    width: 280px;
    flex: none;
    display: flex;
    flex-direction: column;
    background: linear-gradient(180deg, #83173f 0%, #6a0f35 50%, #4d0725 100%);
    color: #fff;
    border-right: 1px solid rgba(255,255,255,0.08);
    box-sizing: border-box;
}
.brand {
    height: 64px;
    flex: none;
    display: flex;
    align-items: center;
    padding: 0 0 0 15px;
    box-sizing: border-box;
    background: rgba(255,255,255,0.05);
    border-bottom: 1px solid rgba(255,255,255,0.12);
}
.brand-logo { width: 36px; height: 36px; flex: none; }
.brand-name {
    margin-left: 12px;
    width: 115px;
    font-size: 16px;
    font-weight: 700;
    white-space: nowrap;
}
.brand-back { width: 18px; height: 18px; margin-left: 8px; }
.brand-close { width: 11px; height: 11px; margin-left: 36px; }
.menu-search {
    height: 40px;
    margin: 12px 13px 3px 12px;
    padding: 0 12px 0 14px;
    display: flex;
    align-items: center;
    justify-content: space-between;
    background: rgba(255,255,255,0.13);
    border: 1px solid rgba(255,255,255,0.22);
    border-radius: 10px;
    font-size: 15.6px;
    font-style: italic;
    color: rgba(255,255,255,0.92);
    box-sizing: border-box;
}
.menu-search .ic { width: 18px; height: 18px; color: rgba(255,255,255,0.7); }
.menu { flex: 1; }
.menu-group {
    margin: 0 16px;
    padding: 8px 0 1px;
    border-bottom: 1px solid rgba(255,255,255,0.14);
}
.menu-group-last { border-bottom: none; }
.menu-label {
    height: 16px;
    line-height: 16px;
    margin-bottom: 7px;
    font-size: 11.5px;
    font-weight: 600;
    letter-spacing: 0.5px;
    color: rgba(255,255,255,0.6);
}
.menu-item {
    height: 44px;
    margin: 0 0 8px;
    display: flex;
    align-items: center;
    font-size: 14px;
    line-height: 20px;
    font-weight: 500;
    color: #fff;
}
.menu-item > .ic:first-child {
    width: 21px;
    height: 21px;
    margin: 0 13px 0 6px;
    stroke-width: 1.7;
}
.ic-pink { color: #f0569f; }
.ic-dusty { color: #9c6272; }
.menu-item > .ic-bold:first-child { stroke-width: 2.4; }
.menu-text { flex: 1; min-width: 0; }
.menu-arrow {
    width: 20px;
    height: 20px;
    margin: 0 5px 0 15px;
    stroke-width: 1.2;
    color: rgba(255,255,255,0.85);
}
.tag {
    flex: none;
    height: 26px;
    line-height: 26px;
    padding: 0 6px;
    border-radius: 4px;
    background: #ea4a9a;
    font-size: 13.6px;
    font-weight: 700;
    color: #fff;
    margin-left: 8px;
}
.tag-soft {
    padding: 0 8px;
    background: linear-gradient(90deg, rgba(100,25,60,0.9), rgba(190,50,100,0.55));
    color: #f3c6d8;
    font-weight: 600;
}
.tag-dim { background: #54213c; color: #d83d8a; font-weight: 600; }
.side-user {
    height: 55px;
    flex: none;
    display: flex;
    align-items: center;
    padding: 0 16px 0 18px;
    border-top: 1px solid rgba(255,255,255,0.16);
    box-sizing: border-box;
}
.side-avatar {
    position: relative;
    width: 32px;
    height: 30px;
    line-height: 30px;
    text-align: center;
    flex: none;
    background: #e6389a;
    border-radius: 10px;
    font-size: 13px;
    font-weight: 700;
}
.side-status {
    position: absolute;
    right: -3px;
    bottom: -4px;
    width: 7px;
    height: 7px;
    border-radius: 50%;
    background: #1c82b8;
    border: 2px solid #4d0725;
}
.side-user-text { flex: 1; margin-left: 10px; line-height: 13px; }
.side-user-text strong { display: block; font-size: 13.5px; font-weight: 600; }
.side-user-text span {
    display: flex;
    align-items: center;
    gap: 1px;
    font-size: 11.5px;
    color: rgba(255,255,255,0.65);
}
.side-user-text .ic { width: 11px; height: 11px; }
.side-user-arrow { width: 13px; height: 13px; color: rgba(255,255,255,0.8); }

/* barra do topo */
.page {
    flex: 1;
    min-width: 0;
    display: flex;
    flex-direction: column;
    min-height: 1933px;
}
.topbar {
    height: 64px;
    flex: none;
    display: flex;
    align-items: center;
    padding: 0 25px 0 38px;
    color: #fff;
    background: linear-gradient(118deg, #84183f 0%, #a81f58 30%, #d8257a 58%, #dc2778 66%, #a81f58 86%, #88194a 100%);
    box-shadow: 0 3px 10px rgba(40,0,20,0.1);
}
.top-burger { color: rgba(255,255,255,0.7); width: 18px; height: 18px; stroke-width: 1.6; }
.crumbs {
    margin-left: 22px;
    display: flex;
    align-items: center;
    font-size: 14px;
    font-weight: 500;
}
.crumb-home { width: 24px; height: 24px; margin-right: 6px; stroke-width: 1.3; }
.crumb { border-bottom: 1.5px solid #fff; line-height: 17px; }
.crumb-sep { width: 10px; height: 12px; margin: 0; color: #f0b040; }
.crumb-first + .crumb-sep { margin: 0 0 0 8px; }
.crumb-current {
    margin-left: 6px;
    height: 28px;
    line-height: 28px;
    padding: 0 10px;
    border-radius: 6px;
    background: rgba(90,20,50,0.55);
    color: rgba(255,255,255,0.75);
    font-weight: 600;
}
.top-tools {
    margin-left: auto;
    display: flex;
    align-items: center;
}
.top-btn {
    position: relative;
    width: 56px;
    height: 42px;
    display: flex;
    align-items: center;
    justify-content: center;
}
.top-btn .ic { width: 20px; height: 20px; }
.top-search::before {
    content: '';
    position: absolute;
    left: 9px;
    top: 3px;
    width: 30px;
    height: 36px;
    border-radius: 12px;
    border-left: 1px solid rgba(240,120,60,0.45);
    border-top: 1px solid rgba(240,120,60,0.45);
}
.top-search .top-bolt {
    position: absolute;
    top: 7px;
    right: 12px;
    width: 12px;
    height: 12px;
    fill: #f1a92a;
    stroke: #f1a92a;
}
.top-spark { color: #ee5aa3; width: 52px; }
.top-spark .ic { width: 26px; height: 26px; }
.count {
    position: absolute;
    top: 0;
    left: 32px;
    min-width: 8px;
    height: 16px;
    line-height: 16px;
    padding: 0 3px;
    border-radius: 9px;
    background: #7c1040;
    color: #fff;
    font-size: 9.5px;
    font-weight: 700;
    text-align: center;
}
.top-spark .count { top: 6px; left: 29px; }
.lang {
    position: absolute;
    left: 36px;
    top: 31px;
    padding: 0 2px;
    height: 11px;
    line-height: 11px;
    border-radius: 2px;
    background: #431030;
    color: #f1a92a;
    font-size: 8px;
    font-weight: 600;
}
.top-whats { color: #30b5b0; }
.top-whats .ic { width: 22px; height: 22px; }
.top-gear .ic { width: 32px; height: 32px; }
.top-user {
    margin-left: 3px;
    width: 120px;
    height: 43px;
    display: flex;
    align-items: center;
    padding: 0 10px 0 11px;
    box-sizing: border-box;
    border: 1px solid rgba(255,255,255,0.08);
    background: rgba(255,255,255,0.05);
    border-radius: 10px;
    font-size: 14px;
    font-weight: 600;
}
.top-user .ic:first-child { width: 18px; height: 18px; margin-right: 12px; }
.top-user-arrow { width: 12px; height: 12px; margin-left: auto; color: rgba(255,255,255,0.7); }

/* conteudo */
.content {
    flex: 1;
    padding: 24px 25px 0;
}
.head-card,.main-card,.save-card {
    background: #fff;
    border: 1px solid #eceef2;
    box-shadow: 0 12px 22px rgba(219,39,119,0.05);
    box-sizing: border-box;
}
.head-card {
    position: relative;
    height: 191px;
    border-radius: 26px;
    padding: 72px 23px 0;
    display: flex;
    justify-content: space-between;
}
.head-pin {
    position: absolute;
    left: 544px;
    top: 1px;
    width: 24px;
    height: 24px;
    color: #dfe1e8;
}
.head-left { width: 335px; }
.head-title { display: flex; align-items: center; gap: 12px; }
.head-icon {
    width: 48px;
    height: 48px;
    border-radius: 13px;
    display: flex;
    align-items: center;
    justify-content: center;
    color: #fff;
    background: linear-gradient(135deg, #df2a7d, #b91e62);
    box-shadow: 0 8px 14px rgba(120,20,60,0.16);
}
.head-icon .ic { width: 19px; height: 19px; }
.head-title h1 {
    font-size: 25px;
    font-weight: 700;
    color: #1e2a5a;
    letter-spacing: -0.1px;
}
.head-left p {
    margin: 3px 0 0 56px;
    width: 325px;
    font-size: 14px;
    line-height: 20px;
    color: #6c7488;
}
.head-right {
    display: flex;
    flex-direction: column;
    align-items: flex-end;
}
.head-tools { display: flex; align-items: center; }
.tool { display: flex; justify-content: center; align-items: center; height: 44px; }
.tool-back { width: 44px; color: #a89aa8; }
.tool-back .ic { width: 22px; height: 22px; }
.tool-print { width: 90px; color: #a89aa8; }
.tool-print .ic { width: 26px; height: 26px; stroke-width: 1.8; }
.tool-dots { width: 140px; color: #e0e2e8; }
.tool-dots .ic { width: 22px; height: 22px; }
.tool-check { width: 96px; color: #dba21f; }
.tool-check .ic { width: 30px; height: 30px; stroke-width: 2.2; }
.tool-plus { width: 44px; color: #dc2778; }
.tool-plus .ic { width: 22px; height: 22px; stroke-width: 1.8; }
.btn-label {
    width: 248px;
    height: 44px;
    display: flex;
    align-items: center;
    justify-content: center;
    gap: 14px;
    border-radius: 10px;
    background: #fdf0f5;
    color: #d1205f;
    font-size: 14px;
    box-sizing: border-box;
}
.btn-tag {
    margin-top: 12px;
    width: 177px;
    height: 38px;
    display: flex;
    align-items: center;
    justify-content: center;
    gap: 12px;
    border-radius: 12px;
    background: #effcf8;
    border: 1px solid #9bdde8;
    color: #1d6a88;
    font-size: 14px;
    box-sizing: border-box;
}

/* linha de auditoria */
.audit {
    display: flex;
    align-items: center;
    font-size: 12px;
    color: #1f2a52;
}
.audit-top {
    height: 29px;
    margin: 24px 0 8px;
    padding: 0 13px 0 20px;
    box-sizing: border-box;
}
.audit-add { width: 15px; height: 15px; color: #5a2740; margin-right: 13px; }
.audit-key { color: #7a8090; margin-right: 9px; }
.audit-date { margin-right: 9px; }
.audit-por { color: #a0a4b0; margin-right: 9px; }
.audit-avatar {
    width: 18px;
    height: 18px;
    line-height: 18px;
    border-radius: 50%;
    text-align: center;
    font-size: 10px;
    font-weight: 600;
    margin-right: 8px;
}
.av-green { background: #c9f7e6; color: #17606a; }
.av-blue { background: #dcebfd; color: #2a5fb8; }
.audit-sep { width: 1px; height: 15px; background: #d5d8df; margin: 0 15px 0 17px; }
.audit-edit { color: #5a2740; margin-right: 13px; }
.audit-link {
    position: relative;
    margin-left: auto;
    display: flex;
    align-items: center;
    gap: 8px;
    font-size: 12.4px;
    white-space: nowrap;
    color: #a5a9b5;
}
.audit-link .ic { width: 16px; height: 16px; stroke-width: 1.2; }
.audit-link-marked {
    width: 140px;
    height: 29px;
    padding-left: 40px;
    gap: 6px;
    box-sizing: border-box;
    background: #fbe4d8;
    border: 3px solid #e0435c;
    border-radius: 0 14px 14px 0;
    border-left: none;
    color: #b39a98;
}
.step-mark {
    position: absolute;
    left: -14px;
    top: -27px;
    width: 50px;
    height: 50px;
    line-height: 42px;
    text-align: center;
    box-sizing: border-box;
    border: 4px solid #fff;
    border-radius: 50%;
    background: #e0435c;
    color: #fff;
    font-size: 28px;
    font-weight: 600;
}

/* card principal */
.main-card {
    border-radius: 24px;
    padding: 23px 23px 24px;
    display: flex;
    gap: 34px;
    align-items: flex-start;
}
.form-col { width: 788px; flex: none; padding-top: 1px; }
.notice {
    display: flex;
    align-items: center;
    box-sizing: border-box;
}
.notice-draft {
    height: 68px;
    margin-bottom: 16px;
    padding: 0 31px 0 14px;
    background: #fffbea;
    border-left: 3px solid #f2a20e;
    border-radius: 14px;
}
.notice-redo { color: #5a2740; width: 15px; height: 15px; margin-right: 14px; }
.draft-text { flex: 1; font-size: 14px; color: #6a1735; }
.draft-text strong { font-weight: 500; }
.draft-text small { font-size: 12px; color: #a6662a; }
.btn-amber {
    display: flex;
    align-items: center;
    justify-content: center;
    background: #f59e0b;
    color: #5c0d2c;
    border-radius: 8px;
    font-size: 14px;
    font-weight: 500;
}
.btn-restore { width: 125px; height: 44px; gap: 4px; }
.btn-restore .ic { width: 14px; height: 14px; color: #fff; }
.btn-discard {
    width: 114px;
    display: flex;
    align-items: center;
    justify-content: flex-end;
    gap: 4px;
    font-size: 14px;
    color: #6a1735;
}
.btn-discard .ic { color: #d9d4d8; stroke-width: 3; width: 14px; height: 14px; }
.notice-similar {
    height: 85px;
    margin-bottom: 17px;
    padding: 10px 12px 0;
    background: #edf4fe;
    border: 1px solid #c7defa;
    border-radius: 14px;
    box-sizing: border-box;
}
.similar-line {
    display: flex;
    align-items: center;
    height: 22px;
    font-size: 14px;
    color: #2b5a9e;
}
.similar-line .ic { color: #1c6aa0; margin-right: 13px; }
.similar-line small { margin-left: 4px; font-size: 12px; color: #2b62b0; }
.btn-similar {
    margin-top: 7px;
    width: 174px;
    height: 32px;
    display: flex;
    align-items: center;
    gap: 4px;
    padding-left: 13px;
    box-sizing: border-box;
    border-radius: 16px;
    background: #3b6bcf;
    color: #fff;
    font-size: 13.6px;
    font-weight: 500;
}
.btn-similar .ic { width: 18px; height: 18px; }
.notice-ml {
    height: 70px;
    margin-bottom: 15px;
    padding: 0 12px;
    background: #fffbea;
    border: 1px solid #fde9a6;
    border-radius: 14px;
}
.notice-ml > .ic { color: #6a1735; margin-right: 13px; }
.ml-text { flex: 1; font-size: 14px; color: #7a2030; }
.btn-ml { width: 148px; height: 44px; }
.btn-ml .ic { width: 18px; height: 18px; }

/* abas */
.tabs-card {
    background: #fff;
    border: 1px solid #e6e8ee;
    border-radius: 24px;
    box-shadow: 0 12px 24px rgba(219,39,119,0.05);
}
.tabs {
    display: flex;
    flex-wrap: wrap;
    border-bottom: 2px solid #eceef2;
}
.tab {
    height: 44px;
    display: flex;
    align-items: center;
    padding: 0 20px;
    font-size: 14.4px;
    color: #8a6473;
    box-sizing: border-box;
}
.tab .ic { width: 18px; height: 18px; margin: 0 -1px; }
.tab-active {
    background: #fdeef5;
    border-bottom: 4px solid #e84393;
    border-radius: 8px 8px 10px 10px;
    color: #c01e5d;
    font-weight: 500;
}
.history { padding: 24px 24px 48px; }
.subtabs {
    display: flex;
    flex-wrap: wrap;
    gap: 8px;
    padding-bottom: 12px;
    border-bottom: 1px solid #e8eaee;
}
.subtab {
    height: 44px;
    display: flex;
    align-items: center;
    gap: 12px;
    padding: 0 20px;
    font-size: 14px;
    font-weight: 500;
    color: #2c3358;
    border-radius: 8px;
}
.subtab .ic { color: #5a2740; width: 18px; height: 18px; margin-left: -1px; }
.subtab-active { background: #fde8f1; color: #cf2363; }
.subtab .ic:first-child { stroke-width: 1.3; }
.subtab-active .ic { color: #f6e3ea; }
.stats {
    margin-top: 24px;
    display: grid;
    grid-template-columns: repeat(4, 1fr);
    gap: 17px 16px;
}
.stat {
    padding: 16px;
    border: 1px solid #000;
    border-radius: 22px;
    box-sizing: border-box;
}
.stat-label {
    display: flex;
    align-items: center;
    gap: 11px;
    font-size: 12px;
    line-height: 16px;
    text-transform: uppercase;
    letter-spacing: 0.3px;
}
.stat-label .ic { color: #2c3358; width: 18px; height: 18px; margin: -1px 0 -1px -1px; stroke-width: 1.3; }
.stat-value {
    margin-top: 4px;
    font-size: 24px;
    line-height: 31px;
    font-weight: 600;
}
.stat-small .stat-value { margin-top: 5px; font-size: 20px; line-height: 26px; }
.stat-sub { margin-top: 3px; font-size: 12px; line-height: 16px; }
.stat-blue { background: linear-gradient(135deg, #edf4fe, #dfebfd); border-color: #c3dcfb; }
.stat-blue .stat-label { color: #2f6fb0; }
.stat-blue .stat-value { color: #1d5f96; }
.stat-blue .stat-sub { color: #2f6fb0; }
.stat-date .stat-value { color: #1c4f86; }
.stat-green { background: linear-gradient(135deg, #edfbf6 0%, #e4faf1 60%, #c9f7e4 100%); border-color: #8fdbe4; }
.stat-green .stat-label { color: #1f6f80; }
.stat-green .stat-value { color: #1e2a52; }
.stat-yellow { background: linear-gradient(135deg, #fff9e3, #fef1c4); border-color: #fde68a; }
.stat-yellow .stat-label { color: #e08a0b; }
.stat-yellow .stat-value { color: #8b1c3f; }
.stat-pink { background: #fce9f2; border-color: #fbdfeb; }
.stat-pink .stat-label { color: #d6246f; }
.stat-pink .stat-value { color: #a8174f; }
.stat-red { background: #fde8e8; border-color: #fbcdb9; }
.stat-red .stat-label { color: #e03b4f; }
.stat-red .stat-value { color: #8b1c3f; }
.stat-red .stat-sub { color: #e0393e; }

/* coluna da direita */
.side-col {
    width: 240px;
    flex: none;
    display: flex;
    flex-direction: column;
    gap: 25px;
}
.side-close {
    height: 32px;
    margin-bottom: -25px;
    display: flex;
    justify-content: flex-end;
    padding: 15px 21px 0 0;
    box-sizing: border-box;
    color: #b0a8b8;
}
.side-close .ic { width: 16px; height: 16px; stroke-width: 1.2; }
.side-card {
    padding: 24px;
    border: 1px solid #e9ebef;
    border-radius: 24px;
    background: #fff;
    box-shadow: 0 12px 24px rgba(219,39,119,0.05);
    box-sizing: border-box;
}
.side-card h3 {
    display: flex;
    align-items: center;
    gap: 4px;
    height: 27px;
    margin-bottom: 17px;
    font-size: 19.2px;
    font-weight: 700;
    white-space: nowrap;
    color: #1e2a5a;
    letter-spacing: 0.2px;
}
.side-card h3 .ic { width: 17px; height: 17px; margin-left: -2px; }
.ic-mauve { color: #7a3a5c; }
.row-between {
    display: flex;
    justify-content: space-between;
    font-size: 14px;
    line-height: 20px;
    color: #2c3a5c;
}
.row-between b { font-weight: 500; color: #2a3358; }
.valid-count { margin-top: 18px; }
.valid-bar {
    margin-top: 12px;
    height: 8px;
    border-radius: 4px;
    background: #46adb8;
}
.valid-list { margin: 16px 0 -1px; display: flex; flex-direction: column; gap: 8px; }
.valid-list li {
    display: flex;
    align-items: center;
    justify-content: space-between;
    font-size: 14px;
    line-height: 20px;
    color: #2c3a5c;
}
.dot {
    width: 16px;
    height: 16px;
    border: 1px solid #1e2a5a;
    border-radius: 50%;
    box-sizing: border-box;
}
.dot-on {
    background: #1e2a5a;
    display: flex;
    align-items: center;
    justify-content: center;
    color: #fff;
}
.dot-on .ic { width: 10px; height: 10px; stroke-width: 3; }
.quick-list { display: flex; flex-direction: column; gap: 8px; }
.quick {
    height: 44px;
    display: flex;
    align-items: center;
    justify-content: center;
    font-size: 14px;
    color: #2c3a5c;
}
.side-card-pink { padding-bottom: 23px; background: #fdf0f6; border-color: #f7e3ec; }
.status-list { display: flex; flex-direction: column; gap: 8px; }
.txt-red.txt-red { color: #e23b4f; }
.side-card-yellow { background: #fffbea; border-color: #fde9a6; }
.help-list { display: flex; flex-direction: column; gap: 8px; }
.help-list li {
    display: flex;
    gap: 8px;
    font-size: 14px;
    line-height: 20px;
    color: #2c3a5c;
}
.help-list .ic { width: 12px; height: 12px; margin-top: 2px; stroke-width: 2.2; }

/* rodape do formulario */
.save-card {
    position: relative;
    margin-top: 17px;
    padding: 26px 23px 24px;
    border-radius: 24px;
    overflow: hidden;
}
.save-card::before {
    content: '';
    position: absolute;
    left: 0;
    right: 0;
    top: 0;
    height: 4px;
    background: linear-gradient(90deg, #dc2778 0 5%, #e4435a 5% 13%, #d96e74 13% 36%, #dba21f 36% 64%, #d96e74 64% 87%, #e4435a 87% 95%, #dc2778 95%);
}
.save-row {
    height: 66px;
    display: flex;
    align-items: center;
    padding-bottom: 17px;
    box-sizing: border-box;
    border-bottom: 1px solid #e8eaee;
    margin-bottom: 15px;
}
.save-icon {
    width: 40px;
    height: 40px;
    flex: none;
    display: flex;
    align-items: center;
    justify-content: center;
    border-radius: 50%;
    background: #fde5d3;
    color: #3a2a50;
}
.save-icon .ic { width: 20px; height: 20px; stroke-width: 1.3; }
.save-text { flex: 1; margin-left: 12px; }
.save-text strong {
    display: block;
    font-size: 16px;
    line-height: 22px;
    font-weight: 500;
}
.save-text span { font-size: 14px; line-height: 22px; color: #64748b; }
.btn-cancel {
    width: 112px;
    height: 48px;
    display: flex;
    align-items: center;
    justify-content: center;
    gap: 8px;
    border: 1px solid #d8ced3;
    border-radius: 12px;
    font-size: 14px;
    font-weight: 500;
    color: #2c3358;
    box-sizing: border-box;
}
.btn-cancel .ic { width: 10px; height: 10px; }
.btn-save {
    margin-left: 14px;
    width: 167px;
    height: 45px;
    display: flex;
    align-items: center;
    justify-content: center;
    gap: 14px;
    border-radius: 10px;
    color: #fff;
    font-size: 14px;
    font-weight: 500;
    background: linear-gradient(155deg, #dc2778 0%, #dc2778 18%, #e8449a 18%, #e33f8e 50%, #e8449a 80%, #dc2778 80%);
}
.audit-bottom {
    height: 44px;
    padding: 0 20px;
    border-radius: 10px;
    background: #fafbfd;
}
.audit-bottom .audit-edit { margin-left: 16px; }
.audit-clock { color: #7a1e45; }
.audit-link .audit-clock { margin-right: -1px; }

/* rodape */
.footer {
    height: 57px;
    flex: none;
    margin-top: auto;
    padding-top: 2px;
    box-sizing: border-box;
    display: flex;
    flex-direction: column;
    align-items: center;
    justify-content: center;
    gap: 7px;
    color: #fff;
    background: linear-gradient(100deg, #df2a7c 0%, #c51f65 60%, #ae1b5b 100%);
}
.foot-license {
    display: flex;
    align-items: center;
    gap: 6px;
    font-size: 12px;
    font-weight: 500;
    line-height: 14px;
}
.foot-license b { font-weight: 700; margin-left: -2px; }
.foot-license .ic { width: 11px; height: 13px; color: #f1c040; }
.foot-links {
    display: flex;
    align-items: center;
    padding-right: 8px;
    font-size: 11px;
    line-height: 14px;
    color: rgba(255,255,255,0.92);
}
.foot-links i {
    width: 3px;
    height: 3px;
    border-radius: 50%;
    background: #fff;
    margin: 0 21px;
}
.foot-links .foot-dot-first { margin-left: 13px; }
.foot-links a { color: #fbe3d0; }
.foot-links code {
    font-family: 'Liberation Mono', monospace;
    font-size: 11.8px;
    color: #fbe3d0;
}
.float-tab {
    position: absolute;
    top: 967px;
    right: 0;
    width: 44px;
    height: 66px;
    display: flex;
    align-items: center;
    justify-content: center;
    border-radius: 12px 0 0 12px;
    background: #d98a8a;
    color: #c96a70;
    box-shadow: 0 2px 8px rgba(120,20,60,0.1);
}
```
